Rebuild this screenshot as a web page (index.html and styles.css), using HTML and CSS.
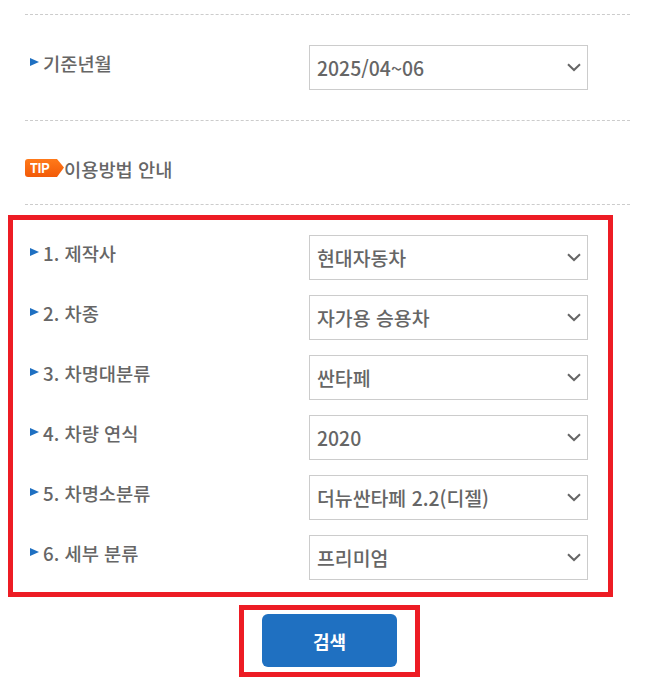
FILE: index.html
```html
<!DOCTYPE html>
<html lang="ko">
<head>
    <meta charset="UTF-8">
    <meta name="viewport" content="width=device-width, initial-scale=1.0">
    <title>차량 검색</title>
    <link rel="stylesheet" href="styles.css">
</head>
<body>
    <!-- Base period -->
    <div class="section section-period">
        <div class="field">
            <label class="field-label" for="period">기준년월</label>
            <select class="field-select" id="period">
                <option>2025/04~06</option>
            </select>
        </div>
    </div>

    <!-- Usage tip -->
    <div class="section section-tip">
        <span class="tip-badge">
            <svg width="39" height="20" viewBox="0 0 39 20" aria-hidden="true">
                <defs>
                    <linearGradient id="tipFill" x1="0" y1="0" x2="0" y2="1">
                        <stop offset="0" stop-color="#ff7a1a"/>
                        <stop offset="1" stop-color="#f25a08"/>
                    </linearGradient>
                </defs>
                <path d="M3 1H32L39 9.5L32 19H3Q0 19 0 16V4Q0 1 3 1Z" fill="url(#tipFill)"/>
            </svg>
            <span class="tip-text">TIP</span>
        </span>
        <span class="tip-title">이용방법 안내</span>
    </div>

    <!-- Vehicle filters -->
    <form class="filter-box">
        <div class="field">
            <label class="field-label" for="maker">1. 제작사</label>
            <select class="field-select" id="maker"><option>현대자동차</option></select>
        </div>
        <div class="field">
            <label class="field-label" for="kind">2. 차종</label>
            <select class="field-select" id="kind"><option>자가용 승용차</option></select>
        </div>
        <div class="field">
            <label class="field-label" for="model">3. 차명대분류</label>
            <select class="field-select" id="model"><option>싼타페</option></select>
        </div>
        <div class="field">
            <label class="field-label" for="year">4. 차량 연식</label>
            <select class="field-select" id="year"><option>2020</option></select>
        </div>
        <div class="field">
            <label class="field-label" for="sub">5. 차명소분류</label>
            <select class="field-select" id="sub"><option>더뉴싼타페 2.2(디젤)</option></select>
        </div>
        <div class="field">
            <label class="field-label" for="detail">6. 세부 분류</label>
            <select class="field-select" id="detail"><option>프리미엄</option></select>
        </div>
    </form>

    <div class="search-box">
        <button class="search-button" type="button">검색</button>
    </div>
</body>
</html>
```

FILE: styles.css
```css
body {
    margin: 0;
    padding: 0;
    background: #fff;
    color: #666;
    font-family: "Noto Sans CJK KR", "Noto Sans", sans-serif;
}

.section {
    margin: 14px 23px 0 25px;
    border-top: 1px dashed #ccc;
}

.section-period {
    padding: 30px 42px 30px 5px;
}

.section-tip {
    margin-top: 0;
    height: 83px;
    display: flex;
    align-items: center;
    border-bottom: 1px dashed #ccc;
    box-sizing: content-box;
}

.field {
    display: flex;
    justify-content: space-between;
    align-items: flex-start;
}

.field-label {
    font-size: 18.7px;
    font-weight: 500;
    line-height: 26px;
    margin-top: 5px;
    padding-left: 13px;
    position: relative;
}

/* small blue arrow in front of each label */
.field-label::before {
    content: "";
    position: absolute;
    left: 0;
    top: 8px;
    border-left: 9px solid #1f70c1;
    border-top: 4.5px solid transparent;
    border-bottom: 4.5px solid transparent;
}

.field-select {
    appearance: none;
    -webkit-appearance: none;
    width: 279px;
    height: 45px;
    padding: 0 30px 0 7px;
    border: 1px solid #ccc;
    border-radius: 0;
    background: #fff url("data:image/svg+xml;utf8,<svg xmlns='http://www.w3.org/2000/svg' width='14' height='9' viewBox='0 0 14 9'><path d='M1 1.2L7 7L13 1.2' fill='none' stroke='%23666' stroke-width='2'/></svg>") no-repeat right 6px top 17px;
    color: #666;
    font-family: inherit;
    font-size: 19.4px;
    font-weight: 500;
}

.tip-badge {
    position: relative;
    width: 39px;
    height: 20px;
    margin-top: 10px;
}

.tip-badge svg {
    display: block;
}

.tip-text {
    position: absolute;
    left: 5px;
    top: 1px;
    color: #fff;
    font-family: "Liberation Sans", sans-serif;
    font-size: 14px;
    font-weight: 700;
    line-height: 18px;
    transform: scaleX(.9);
    transform-origin: left center;
}

.tip-title {
    font-size: 18.7px;
    font-weight: 500;
    line-height: 26px;
    margin-top: 13px;
}

.filter-box {
    width: 605px;
    box-sizing: border-box;
    margin: 10px 0 0 8px;
    padding: 15px 20px 0 17px;
    height: 382px;
    border: 5px solid #ed1c24;
    display: flex;
    flex-direction: column;
    gap: 15px;
}

.search-box {
    width: 181px;
    height: 72px;
    box-sizing: border-box;
    margin: 8px 0 0 239px;
    border: 5px solid #ed1c24;
    display: flex;
    justify-content: center;
    padding-top: 4px;
}

.search-button {
    width: 135px;
    height: 53px;
    border: none;
    border-radius: 6px;
    background: #1f70c1;
    color: #fff;
    font-family: inherit;
    font-size: 18px;
    font-weight: 700;
    cursor: pointer;
}
```
